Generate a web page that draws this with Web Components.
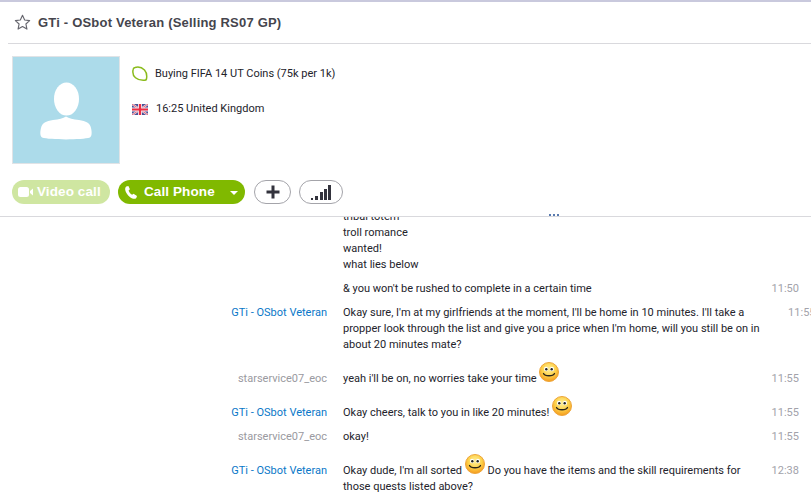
<!DOCTYPE html>
<html>
<head>
<meta charset="utf-8">
<title>Conversation</title>
<style>
  html, body { margin: 0; padding: 0; background: #fff; overflow: hidden; }
  body { font: 11px/16px Roboto, sans-serif; color: #23232b; }
</style>
</head>
<body>
<skype-window>
  <conv-header title="GTi - OSbot Veteran (Selling RS07 GP)"></conv-header>
  <profile-panel mood="Buying FIFA 14 UT Coins (75k per 1k)" place="16:25 United Kingdom"></profile-panel>
  <call-bar></call-bar>
  <chat-list>
    <chat-row>tribal totem<br>troll romance<br>wanted!<br>what lies below</chat-row>
    <chat-row time="11:50">&amp; you won't be rushed to complete in a certain time</chat-row>
    <chat-row name="GTi - OSbot Veteran" kind="them" time="11:55">Okay sure, I'm at my girlfriends at the moment, I'll be home in 10 minutes. I'll take a<br>propper look through the list and give you a price when I'm home, will you still be on in<br>about 20 minutes mate?</chat-row>
    <chat-row name="starservice07_eoc" time="11:55">yeah i'll be on, no worries take your time <smile-icon></smile-icon></chat-row>
    <chat-row name="GTi - OSbot Veteran" kind="them" time="11:55">Okay cheers, talk to you in like 20 minutes! <smile-icon></smile-icon></chat-row>
    <chat-row name="starservice07_eoc" time="11:55">okay!</chat-row>
    <chat-row name="GTi - OSbot Veteran" kind="them" time="12:38">Okay dude, I'm all sorted <smile-icon></smile-icon> Do you have the items and the skill requirements for<br>those quests listed above?</chat-row>
  </chat-list>
</skype-window>

<script>
  class SkypeWindow extends HTMLElement {
    constructor() {
      super();
      this.attachShadow({ mode: 'open' });
      this.shadowRoot.innerHTML = `
        <style>
          :host {
            display: flex;
            flex-direction: column;
            height: 100vh;
            box-sizing: border-box;
            border-top: 2px solid #c9c9dd;
            overflow: hidden;
          }
        </style>
        <slot></slot>
      `;
    }
  }

  class ConvHeader extends HTMLElement {
    constructor() {
      super();
      this.attachShadow({ mode: 'open' });
      this.shadowRoot.innerHTML = `
        <style>
          :host {
            display: flex;
            align-items: center;
            gap: 7px;
            height: 41px;
            margin-left: 8px;
            padding-left: 6px;
            border-bottom: 1px solid #d9d9dd;
          }
          svg { width: 17px; height: 17px; flex: none; }
          h1 {
            margin: 0;
            font: bold 13px/18px "Liberation Sans", sans-serif;
            letter-spacing: 0.2px;
            color: #45454d;
          }
        </style>
        <svg viewBox="0 0 15 15">
          <path d="M7.5 1.2l1.9 4.1 4.4.5-3.3 3 .9 4.5-3.9-2.3-3.9 2.3.9-4.5-3.3-3 4.4-.5z" fill="none" stroke="#66666e" stroke-width="1" stroke-linejoin="round"/>
        </svg>
        <h1></h1>
      `;
      this.shadowRoot.querySelector('h1').textContent = this.getAttribute('title');
    }
  }

  class ProfilePanel extends HTMLElement {
    constructor() {
      super();
      this.attachShadow({ mode: 'open' });
      this.shadowRoot.innerHTML = `
        <style>
          :host {
            display: flex;
            gap: 12px;
            padding: 12px 0 0 12px;
          }
          .avatar {
            width: 106px;
            height: 106px;
            flex: none;
            background: #acdbea;
            border: 1px solid #e0e3e6;
          }
          .avatar svg { display: block; width: 106px; height: 106px; }
          .info {
            display: flex;
            flex-direction: column;
            gap: 19px;
            padding-top: 10px;
            color: #23232b;
          }
          .line { display: flex; align-items: center; height: 16px; }
          .icon { width: 16px; height: 16px; flex: none; margin-right: 7px; }
          #place { margin-left: 1px; }
        </style>
        <div class="avatar">
          <svg viewBox="0 0 106 106">
            <ellipse cx="53.500" cy="42" rx="12.500" ry="16.500" fill="#fff"/>
            <path d="M53 59.500c-3 2-7 3-13 3.500-7 1-11 3-12 8-1 4-1 8 1 9.500 8 2.500 40 2.500 48 0 2-1.500 2-5.500 1-9.500-1-5-5-7-12-8-6-.5-10-1.500-13-3.500z" fill="#fff"/>
          </svg>
        </div>
        <div class="info">
          <div class="line">
            <svg class="icon" viewBox="0 0 16 16">
              <path d="M3 1.500c3-.8 7 0 9.500 2.500 2 2.200 2.500 6 2 9-.2 1-1 1.300-2 1.300-3 .2-6.500-.3-9-2.500C1.200 9.800.5 6 1.200 3.200c.2-.9.9-1.500 1.800-1.700z" fill="none" stroke="#8abb1c" stroke-width="1.500"/>
            </svg>
            <span id="mood"></span>
          </div>
          <div class="line">
            <svg class="icon" viewBox="0 0 16 11" style="height:11px">
              <rect width="16" height="11" fill="#4a4f96"/>
              <path d="M0 0l16 11M16 0L0 11" stroke="#e8e0ea" stroke-width="2.200"/>
              <path d="M0 0l16 11M16 0L0 11" stroke="#e6455a" stroke-width=".8"/>
              <path d="M8 0v11M0 5.500h16" stroke="#eee6ee" stroke-width="4"/>
              <path d="M8 0v11M0 5.500h16" stroke="#ee2c42" stroke-width="2.200"/>
            </svg>
            <span id="place"></span>
          </div>
        </div>
      `;
      this.shadowRoot.querySelector('#mood').textContent = this.getAttribute('mood');
      this.shadowRoot.querySelector('#place').textContent = this.getAttribute('place');
    }
  }

  class CallBar extends HTMLElement {
    constructor() {
      super();
      this.attachShadow({ mode: 'open' });
      this.shadowRoot.innerHTML = `
        <style>
          :host {
            display: flex;
            position: relative;
            align-items: center;
            height: 24px;
            margin-top: 16px;
            padding: 0 0 12px 12px;
            border-bottom: 1px solid #d9d9dd;
            font: bold 13.5px/24px "Liberation Sans", sans-serif;
            letter-spacing: 0.1px;
          }
          .btn {
            display: flex;
            align-items: center;
            box-sizing: border-box;
            height: 24px;
            border-radius: 12px;
            color: #fff;
          }
          .video { width: 98px; padding-left: 6px; gap: 3px; background: #cfe6a1; margin-right: 8px; }
          .phone { width: 127px; padding-left: 7px; gap: 7px; background: #80b900; margin-right: 9px; }
          .phone .caret {
            margin-left: auto;
            margin-right: 7px;
            width: 0;
            height: 0;
            border: 4px solid transparent;
            border-top: 4px solid #fff;
            border-bottom: 0;
            margin-top: 1px;
          }
          .round {
            justify-content: center;
            background: #fff;
            border: 1px solid #a4a4aa;
          }
          .plus { width: 37px; margin-right: 8px; }
          .signal { width: 44px; }
          .dots {
            position: absolute;
            left: 549px;
            bottom: 0;
            display: flex;
            gap: 2px;
          }
          .dots i { display: block; width: 2px; height: 2px; background: #5a7bb0; }
        </style>
        <div class="btn video">
          <svg width="16" height="10" viewBox="0 0 16 10">
            <rect x="0" y="0" width="11" height="10" rx="2.500" fill="#fff"/>
            <path d="M12 4l3-2.500v7L12 6z" fill="#fff"/>
          </svg>
          <span>Video call</span>
        </div>
        <div class="btn phone">
          <svg width="12" height="13" viewBox="0 0 12 13">
            <path d="M1.200.5L3.400 0l1.500 3.300-1.300 1.300c.5 1.700 1.800 3.400 3.500 4.200l1.400-1.100L12 10l-.7 2c-.6.800-2 1-3.200.7C4.500 11.700 1.300 8 .3 4.200 0 2.800.3 1.300 1.200.5z" fill="#fff"/>
          </svg>
          <span>Call Phone</span>
          <span class="caret"></span>
        </div>
        <div class="btn round plus">
          <svg width="14" height="14" viewBox="0 0 14 14">
            <path d="M7 .5v13M.5 7h13" stroke="#33333d" stroke-width="3"/>
          </svg>
        </div>
        <div class="btn round signal">
          <svg width="20" height="15" viewBox="0 0 20 15">
            <rect x="0" y="13" width="2" height="2" fill="#33333d"/>
            <rect x="4" y="11" width="3" height="4" fill="#33333d"/>
            <rect x="9" y="7" width="3" height="8" fill="#33333d"/>
            <rect x="13" y="4" width="3" height="11" fill="#33333d"/>
            <rect x="17" y="0" width="3" height="15" fill="#33333d"/>
          </svg>
        </div>
        <div class="dots"><i></i><i></i><i></i></div>
      `;
    }
  }

  class ChatList extends HTMLElement {
    constructor() {
      super();
      this.attachShadow({ mode: 'open' });
      this.shadowRoot.innerHTML = `
        <style>
          :host { display: block; flex: 1; min-height: 0; overflow: hidden; }
          .inner { margin-top: -12px; }
        </style>
        <div class="inner"><slot></slot></div>
      `;
    }
  }

  class ChatRow extends HTMLElement {
    constructor() {
      super();
      this.attachShadow({ mode: 'open' });
      this.shadowRoot.innerHTML = `
        <style>
          :host {
            display: grid;
            grid-template-columns: 327px 1fr 40px;
            column-gap: 16px;
            align-items: baseline;
            padding: 4px 12px 4px 0;
            white-space: nowrap;
          }
          .name { text-align: right; color: #9a9a9f; }
          :host([kind="them"]) .name { color: #0a78c8; }
          .time { text-align: right; color: #a2a2aa; }
        </style>
        <div class="name"></div>
        <div class="body"><slot></slot></div>
        <div class="time"></div>
      `;
      this.shadowRoot.querySelector('.name').textContent = this.getAttribute('name') || '';
      this.shadowRoot.querySelector('.time').textContent = this.getAttribute('time') || '';
    }
  }

  class SmileIcon extends HTMLElement {
    constructor() {
      super();
      this.attachShadow({ mode: 'open' });
      this.shadowRoot.innerHTML = `
        <style>
          :host {
            display: inline-block;
            width: 20px;
            height: 20px;
            margin-top: 1px;
            vertical-align: baseline;
          }
          svg { display: block; width: 20px; height: 20px; }
        </style>
        <svg viewBox="0 0 20 20">
          <defs>
            <radialGradient id="face" cx="50%" cy="35%" r="65%">
              <stop offset="0" stop-color="#fff2a0"/>
              <stop offset=".55" stop-color="#fdd14a"/>
              <stop offset="1" stop-color="#f59a1c"/>
            </radialGradient>
          </defs>
          <circle cx="10" cy="10" r="9.500" fill="url(#face)" stroke="#eda53a" stroke-width="1"/>
          <ellipse cx="7" cy="7" rx="2" ry="2.300" fill="#fff"/>
          <ellipse cx="13" cy="7" rx="2" ry="2.300" fill="#fff"/>
          <circle cx="7.300" cy="7.300" r="1.200" fill="#222"/>
          <circle cx="12.700" cy="7.300" r="1.200" fill="#222"/>
          <path d="M4.500 11.500c1.500 3 9.500 3 11 0" fill="none" stroke="#2b2418" stroke-width="1.300" stroke-linecap="round"/>
        </svg>
      `;
    }
  }

  window.customElements.define('skype-window', SkypeWindow);
  window.customElements.define('conv-header', ConvHeader);
  window.customElements.define('profile-panel', ProfilePanel);
  window.customElements.define('call-bar', CallBar);
  window.customElements.define('chat-list', ChatList);
  window.customElements.define('chat-row', ChatRow);
  window.customElements.define('smile-icon', SmileIcon);
</script>
</body>
</html>
